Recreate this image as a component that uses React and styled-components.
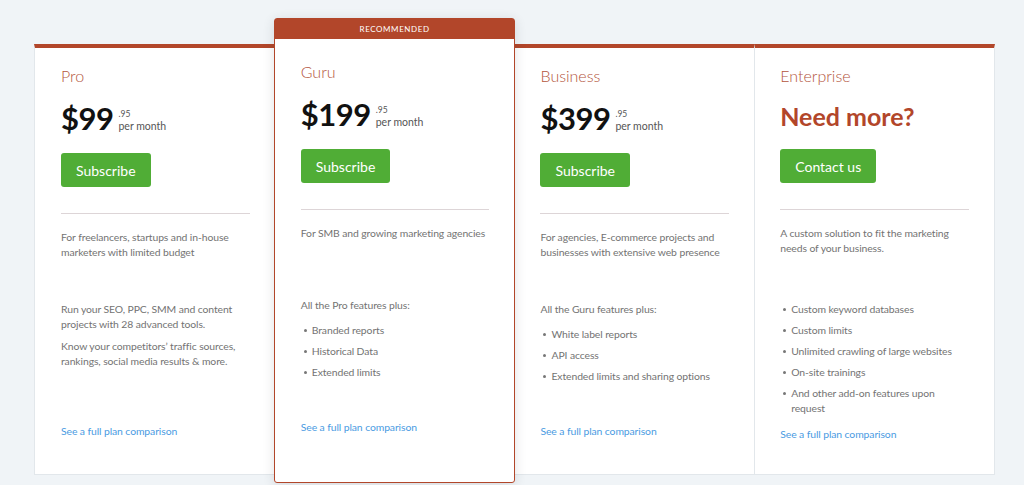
import React from 'react'
import styled, { createGlobalStyle } from 'styled-components'

const GlobalStyle = createGlobalStyle`
    html, body {
        margin: 0;
        padding: 0;
        background: #f0f4f7;
    }
    body {
        font-family: Lato, "Liberation Sans", sans-serif;
    }
`

const RED = '#b2462a'
const LINE = '#e2e7eb'

const Page = styled.div`
    height: 485px;
    box-sizing: border-box;
    padding: 44px 0 0 34px;
`

const Row = styled.div`
    display: flex;
    width: 961px;
    height: 431px;
`

const Card = styled.div`
    width: ${(p) => p.$w}px;
    box-sizing: border-box;
    display: flex;
    flex-direction: column;
    background: #fff;
    border-top: 4px solid ${RED};
    border-bottom: 1px solid ${LINE};
    border-left: ${(p) => (p.$left ? `1px solid ${LINE}` : 'none')};
    border-right: ${(p) => (p.$right ? `1px solid ${LINE}` : 'none')};
    padding: 18px ${(p) => p.$pr}px 0 ${(p) => p.$pl}px;
`

const FeaturedCard = styled.div`
    width: 242px;
    box-sizing: border-box;
    display: flex;
    flex-direction: column;
    margin: -26px 0 -8px;
    background: #fff;
    border: 1px solid ${RED};
    border-radius: 3px;
    box-shadow: 0 2px 12px rgba(40, 50, 60, 0.14);
    position: relative;
    z-index: 1;
`

const Ribbon = styled.div`
    height: 20px;
    line-height: 20px;
    background: ${RED};
    color: #fff;
    font-size: 8px;
    letter-spacing: 0.6px;
    text-align: center;
    text-transform: uppercase;
`

const FeaturedBody = styled.div`
    display: flex;
    flex-direction: column;
    padding: 23px 25px 0 26px;
`

const Title = styled.h3`
    margin: 0;
    font-size: 16px;
    line-height: 20px;
    font-weight: 300;
    color: #b4553c;
`

const PriceRow = styled.div`
    display: flex;
    align-items: flex-start;
    height: ${(p) => p.$h || 36}px;
    margin-top: 14px;
`

const Amount = styled.span`
    font-size: 31px;
    line-height: 36px;
    font-weight: 700;
    color: #111;
    letter-spacing: -0.5px;
`

const Cents = styled.div`
    display: flex;
    flex-direction: column;
    margin-left: 5px;
    padding-top: 8px;
    color: #555;
`

const Fraction = styled.span`
    font-size: 8.5px;
    line-height: 12px;
`

const Period = styled.span`
    font-size: 10.5px;
    line-height: 13px;
`

const Headline = styled.span`
    font-size: 25px;
    line-height: 32px;
    font-weight: 700;
    color: ${RED};
`

const Button = styled.button`
    align-self: flex-start;
    height: 34px;
    margin-top: 17px;
    padding: 0 15px;
    border: none;
    border-radius: 3px;
    background: #50ad36;
    color: #fff;
    font-family: inherit;
    font-size: 14px;
    cursor: pointer;
`

const Divider = styled.hr`
    margin: 26px 0 0;
    border: none;
    border-top: 1px solid #ddd5d7;
`

const textStyle = `
    font-size: 10.4px;
    line-height: 15px;
    letter-spacing: -0.1px;
    color: #737373;
`

const Desc = styled.p`
    margin: 16px 0 0;
    height: ${(p) => p.$h || 72}px;
    ${textStyle}
`

const Features = styled.div`
    min-height: 111px;
    margin-bottom: 11px;
    ${textStyle}

    & > :last-child,
    & li:last-child {
        margin-bottom: 0;
    }
`

const Para = styled.p`
    margin: 0 0 7px;
`

const Intro = styled.p`
    margin: 0 0 10px;
`

const List = styled.ul`
    margin: 0;
    padding: 0;
    list-style: none;
`

const Item = styled.li`
    position: relative;
    margin-bottom: 6px;
    padding-left: 11px;

    &::before {
        content: '';
        position: absolute;
        left: 3px;
        top: 6px;
        width: 3px;
        height: 3px;
        border-radius: 50%;
        background: #777;
    }
`

const Compare = styled.a`
    font-size: 10.4px;
    line-height: 15px;
    letter-spacing: -0.1px;
    color: #4a9be2;
    text-decoration: none;
`

const Price = ({ amount }) => (
    <PriceRow>
        <Amount>${amount}</Amount>
        <Cents>
            <Fraction>.95</Fraction>
            <Period>per month</Period>
        </Cents>
    </PriceRow>
)

const Bullets = ({ items }) => (
    <List>
        {items.map((it) => (
            <Item key={it}>{it}</Item>
        ))}
    </List>
)

const App = () => (
    <>
        <GlobalStyle />
        <Page>
            <Row>
                <Card $w={240} $left $pl={26} $pr={24}>
                    <Title>Pro</Title>
                    <Price amount="99" />
                    <Button>Subscribe</Button>
                    <Divider />
                    <Desc>For freelancers, startups and in-house marketers with limited budget</Desc>
                    <Features>
                        <Para>Run your SEO, PPC, SMM and content projects with 28 advanced tools.</Para>
                        <Para>Know your competitors’ traffic sources, rankings, social media results &amp; more.</Para>
                    </Features>
                    <Compare href="#">See a full plan comparison</Compare>
                </Card>

                <FeaturedCard>
                    <Ribbon>Recommended</Ribbon>
                    <FeaturedBody>
                        <Title>Guru</Title>
                        <Price amount="199" />
                        <Button>Subscribe</Button>
                        <Divider />
                        <Desc>For SMB and growing marketing agencies</Desc>
                        <Features>
                            <Intro>All the Pro features plus:</Intro>
                            <Bullets items={['Branded reports', 'Historical Data', 'Extended limits']} />
                        </Features>
                        <Compare href="#">See a full plan comparison</Compare>
                    </FeaturedBody>
                </FeaturedCard>

                <Card $w={239} $pl={25} $pr={25}>
                    <Title>Business</Title>
                    <Price amount="399" />
                    <Button>Subscribe</Button>
                    <Divider />
                    <Desc>For agencies, E-commerce projects and businesses with extensive web presence</Desc>
                    <Features>
                        <Intro>All the Guru features plus:</Intro>
                        <Bullets items={['White label reports', 'API access', 'Extended limits and sharing options']} />
                    </Features>
                    <Compare href="#">See a full plan comparison</Compare>
                </Card>

                <Card $w={241} $left $right $pl={25} $pr={25}>
                    <Title>Enterprise</Title>
                    <PriceRow $h={32}>
                        <Headline>Need more?</Headline>
                    </PriceRow>
                    <Button>Contact us</Button>
                    <Divider />
                    <Desc $h={76}>A custom solution to fit the marketing needs of your business.</Desc>
                    <Features>
                        <Bullets
                            items={[
                                'Custom keyword databases',
                                'Custom limits',
                                'Unlimited crawling of large websites',
                                'On-site trainings',
                                'And other add-on features upon request',
                            ]}
                        />
                    </Features>
                    <Compare href="#">See a full plan comparison</Compare>
                </Card>
            </Row>
        </Page>
    </>
)

export default App
